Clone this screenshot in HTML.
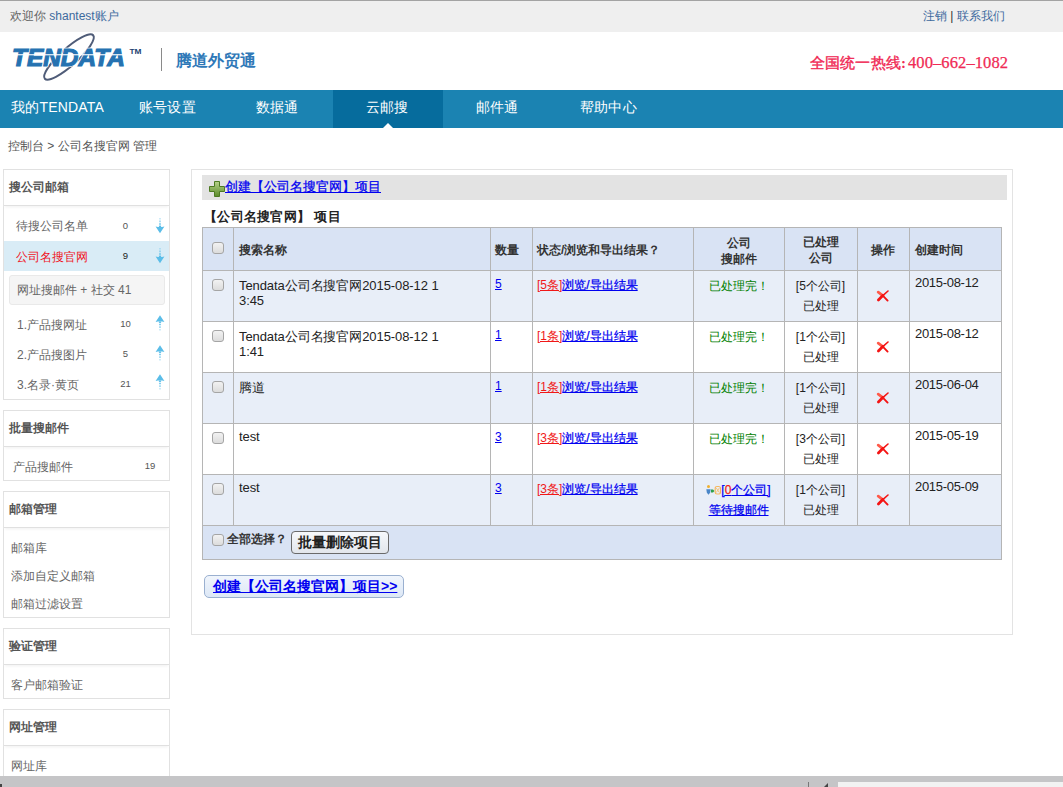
<!DOCTYPE html>
<html><head><meta charset="utf-8">
<style>
*{box-sizing:border-box}
html,body{margin:0;padding:0}
body{width:1063px;height:787px;overflow:hidden;position:relative;background:#fff;font-family:"Liberation Sans",sans-serif;font-size:12px;color:#333}
.abs{position:absolute}
a{color:inherit;text-decoration:none}
#topbar{left:0;top:0;width:1063px;height:32px;z-index:2;background:#efefef;border-top:1px solid #a3a3a3}
#topbar .l{left:10px;top:8px;line-height:14px;color:#666;white-space:nowrap}
#topbar .l span{color:#3d6a9e}
#topbar .r{left:923px;top:8px;line-height:14px;color:#3d6a9e;white-space:nowrap}
#topbar .r b{font-weight:normal;color:#333}
#header{left:0;top:31px;width:1063px;height:59px}
.hot{font-family:"Liberation Serif",serif;font-weight:bold;font-size:15px;line-height:16px;color:#f02a55;white-space:nowrap;letter-spacing:0.15px}
.hot .cj{font-weight:normal;-webkit-text-stroke:0.4px #f02a55}
.hot.dg{font-weight:normal;font-size:16.5px;-webkit-text-stroke:0.25px #f02a55;letter-spacing:0.1px}
.hot i{font-style:normal;display:inline-block;width:8.3px;text-align:center}
#nav{left:0;top:90px;width:1063px;height:38px;background:#1b83b2}
#nav .it{top:-2px;height:38px;line-height:38px;color:#fff;font-size:14px;white-space:nowrap;letter-spacing:0.2px}
#nav .act{left:333px;width:110px;top:0;height:38px;background:#066c9d}
#crumb{left:8px;top:139px;line-height:14px;color:#555;white-space:nowrap}
.panel{left:3px;width:167px;border:1px solid #e1e1e1;background:#fff}
.panel .hd{height:36px;border-bottom:1px solid #e0e0e0;box-shadow:0 2px 3px -1px #f0f0f0;font-weight:bold;color:#555;padding-left:5px;padding-top:10px;line-height:14px}
.panel .it{line-height:14px;color:#666;white-space:nowrap}
.panel .red{color:#f0141e}
.panel .num{left:110px;width:23px;text-align:center;font-size:9.5px;margin-top:-1px;line-height:14px;color:#555}
.panel .dk{color:#222}
.panel .hl{left:0;width:165px;height:30px;background:#d9ecf6}
.panel .box{left:5px;width:156px;height:30px;background:#f5f5f5;border:1px solid #e9e9e9;border-radius:3px;line-height:28px;color:#666;white-space:nowrap}
.panel .arr{left:151px}
#main{left:191px;top:169px;width:822px;height:466px;border:1px solid #e3e3e3}
.hl1{left:202px;width:800px;height:1px;background:#b5b5b5}
.vl1{top:227px;width:1px;background:#b5b5b5}
.cb{width:12px;height:12px;border:1px solid #a5a5a5;border-radius:3px;background:linear-gradient(#f2f2f2,#dcdcdc)}
.th{font-weight:bold;color:#333;line-height:14px;white-space:nowrap}
.td{line-height:16px;white-space:nowrap}
.ctr{text-align:center}
.lk{color:#0000f0;text-decoration:underline;-webkit-text-stroke-width:0.25px}
.lk.red,.red{color:#f01818}
.lk.red,.td.lk{-webkit-text-stroke-width:0}
.btn{border:1px solid #6a6a6a;border-radius:4px;background:linear-gradient(#f6f8fb,#e2e6ec);font-weight:bold;font-size:14px;line-height:21px;text-align:center;color:#222}
.btn2{border:1px solid #9ab0d0;border-radius:5px;background:linear-gradient(#f0f5fc,#dde8f6);font-weight:bold;font-size:14px;line-height:21px;text-align:left;padding-left:8px;color:#0000f0;white-space:nowrap}
.btn2 span{text-decoration:underline}
</style></head><body>

<div id="topbar" class="abs">
  <div class="abs l">欢迎你 <span>shantest账户</span></div>
  <div class="abs r">注销 <b>|</b> 联系我们</div>
</div>

<div id="header" class="abs">
  <svg class="abs" style="left:0;top:0" width="160" height="59" viewBox="0 31 160 59">
    <g transform="translate(69 57) rotate(-42)">
      <ellipse cx="0" cy="0" rx="32.5" ry="8.5" fill="none" stroke="#4f5c78" stroke-width="2"/>
    </g>
    <text x="12" y="65.6" font-family="Liberation Sans" font-weight="bold" font-style="italic" font-size="23" fill="#fff" stroke="#fff" stroke-width="2.6" textLength="113" lengthAdjust="spacingAndGlyphs">TENDATA</text><text x="12" y="65.6" font-family="Liberation Sans" font-weight="bold" font-style="italic" font-size="23" fill="#2572b1" stroke="#2572b1" stroke-width="1.1" textLength="113" lengthAdjust="spacingAndGlyphs">TENDATA</text>
    <rect x="10" y="54.2" width="120" height="1.1" fill="#fff"/>
    <text x="129.5" y="54" font-family="Liberation Sans" font-weight="bold" font-size="7.5" fill="#1d3f70" textLength="12" lengthAdjust="spacingAndGlyphs">TM</text>
  </svg>
  <div class="abs" style="left:161px;top:17px;width:1px;height:23px;background:#8a8a8a"></div>
  <div class="abs" style="left:176px;top:21px;font-size:16px;line-height:18px;color:#2f79b8;font-weight:bold;white-space:nowrap">腾道外贸通</div>
  <div class="abs hot" style="left:810px;top:24px"><span class="cj">全国统一热线</span></div><div class="abs hot" style="left:901px;top:24px">:</div><div class="abs hot dg" style="left:908px;top:24px">400<i>–</i>662<i>–</i>1082</div>
</div>

<div id="nav" class="abs">
  <div class="abs act"></div>
  <div class="abs" style="left:383px;top:33px;width:0;height:0;border-left:5px solid transparent;border-right:5px solid transparent;border-bottom:5px solid #fff"></div>
  <div class="abs it" style="left:11px">我的TENDATA</div>
  <div class="abs it" style="left:139px">账号设置</div>
  <div class="abs it" style="left:256px">数据通</div>
  <div class="abs it" style="left:366px">云邮搜</div>
  <div class="abs it" style="left:476px">邮件通</div>
  <div class="abs it" style="left:580px">帮助中心</div>
</div>

<div id="crumb" class="abs">控制台 &gt; 公司名搜官网 管理</div>


<div class="abs panel" style="top:169px;height:231px">
  <div class="hd">搜公司邮箱</div>
  <div class="abs it" style="top:49px;left:12px">待搜公司名单</div><div class="abs num" style="top:50px">0</div><svg class="abs arr" style="top:48px" width="10" height="16" viewBox="0 0 10 16"><path d="M4 0h2v1.6h-2z" fill="#5bbde8" opacity="0.3"/><path d="M4 2.6h2v1.6h-2z" fill="#5bbde8" opacity="0.5"/><path d="M4 5.2h2v1.6h-2z" fill="#5bbde8" opacity="0.75"/><path d="M3.9 7.6h2.2v1.4h-2.2z" fill="#5bbde8"/><path d="M0.6 8.6 Q2.5 9.2 3.5 9 L5 9 L6.5 9 Q7.5 9.2 9.4 8.6 L5 15.2 Z" fill="#5bbde8"/></svg>
  <div class="abs hl" style="top:71px"></div>
  <div class="abs it red" style="top:80px;left:12px">公司名搜官网</div><div class="abs num dk" style="top:80px">9</div><svg class="abs arr" style="top:78px" width="10" height="16" viewBox="0 0 10 16"><path d="M4 0h2v1.6h-2z" fill="#5bbde8" opacity="0.3"/><path d="M4 2.6h2v1.6h-2z" fill="#5bbde8" opacity="0.5"/><path d="M4 5.2h2v1.6h-2z" fill="#5bbde8" opacity="0.75"/><path d="M3.9 7.6h2.2v1.4h-2.2z" fill="#5bbde8"/><path d="M0.6 8.6 Q2.5 9.2 3.5 9 L5 9 L6.5 9 Q7.5 9.2 9.4 8.6 L5 15.2 Z" fill="#5bbde8"/></svg>
  <div class="abs box" style="top:105px"><span style="position:absolute;left:7px;top:0">网址搜邮件 + 社交</span><span style="position:absolute;left:108px;top:0">41</span></div>
  <div class="abs it" style="top:148px;left:13px">1.产品搜网址</div><div class="abs num" style="top:148px">10</div><svg class="abs arr" style="top:145px" width="10" height="16" viewBox="0 0 10 16"><g transform="translate(0 15.5) scale(1 -1)"><path d="M4 0h2v1.6h-2z" fill="#5bbde8" opacity="0.3"/><path d="M4 2.6h2v1.6h-2z" fill="#5bbde8" opacity="0.5"/><path d="M4 5.2h2v1.6h-2z" fill="#5bbde8" opacity="0.75"/><path d="M3.9 7.6h2.2v1.4h-2.2z" fill="#5bbde8"/><path d="M0.6 8.6 Q2.5 9.2 3.5 9 L5 9 L6.5 9 Q7.5 9.2 9.4 8.6 L5 15.2 Z" fill="#5bbde8"/></g></svg>
  <div class="abs it" style="top:178px;left:13px">2.产品搜图片</div><div class="abs num" style="top:178px">5</div><svg class="abs arr" style="top:175px" width="10" height="16" viewBox="0 0 10 16"><g transform="translate(0 15.5) scale(1 -1)"><path d="M4 0h2v1.6h-2z" fill="#5bbde8" opacity="0.3"/><path d="M4 2.6h2v1.6h-2z" fill="#5bbde8" opacity="0.5"/><path d="M4 5.2h2v1.6h-2z" fill="#5bbde8" opacity="0.75"/><path d="M3.9 7.6h2.2v1.4h-2.2z" fill="#5bbde8"/><path d="M0.6 8.6 Q2.5 9.2 3.5 9 L5 9 L6.5 9 Q7.5 9.2 9.4 8.6 L5 15.2 Z" fill="#5bbde8"/></g></svg>
  <div class="abs it" style="top:208px;left:13px">3.名录·黄页</div><div class="abs num" style="top:208px">21</div><svg class="abs arr" style="top:204px" width="10" height="16" viewBox="0 0 10 16"><g transform="translate(0 15.5) scale(1 -1)"><path d="M4 0h2v1.6h-2z" fill="#5bbde8" opacity="0.3"/><path d="M4 2.6h2v1.6h-2z" fill="#5bbde8" opacity="0.5"/><path d="M4 5.2h2v1.6h-2z" fill="#5bbde8" opacity="0.75"/><path d="M3.9 7.6h2.2v1.4h-2.2z" fill="#5bbde8"/><path d="M0.6 8.6 Q2.5 9.2 3.5 9 L5 9 L6.5 9 Q7.5 9.2 9.4 8.6 L5 15.2 Z" fill="#5bbde8"/></g></svg>
</div>
<div class="abs panel" style="top:410px;height:71px">
  <div class="hd">批量搜邮件</div>
  <div class="abs it" style="top:49px;left:9px">产品搜邮件</div><div class="abs num" style="top:49px;left:136px;width:20px">19</div>
</div>
<div class="abs panel" style="top:491px;height:127px">
  <div class="hd">邮箱管理</div>
  <div class="abs it" style="top:49px;left:7px">邮箱库</div>
  <div class="abs it" style="top:77px;left:7px">添加自定义邮箱</div>
  <div class="abs it" style="top:105px;left:7px">邮箱过滤设置</div>
</div>
<div class="abs panel" style="top:628px;height:71px">
  <div class="hd">验证管理</div>
  <div class="abs it" style="top:49px;left:7px">客户邮箱验证</div>
</div>
<div class="abs panel" style="top:709px;height:80px">
  <div class="hd">网址管理</div>
  <div class="abs it" style="top:49px;left:7px">网址库</div>
</div>

<div id="main" class="abs"></div>
<div class="abs" style="left:202px;top:175px;width:805px;height:25px;background:#e3e3e3"></div>
<svg class="abs" style="left:208px;top:180px" width="18" height="18" viewBox="0 0 18 18">
  <defs><linearGradient id="gp" x1="0" y1="0" x2="0" y2="1"><stop offset="0" stop-color="#b7d38a"/><stop offset="1" stop-color="#5b8a2a"/></linearGradient></defs>
  <path d="M6.5 1.5h5v5h5v5h-5v5h-5v-5h-5v-5h5z" fill="url(#gp)" stroke="#4d7a22" stroke-width="1" stroke-linejoin="round"/>
</svg>
<div class="abs lk" style="left:225px;top:179px;font-size:13px;line-height:15px;color:#0000f0">创建【公司名搜官网】项目</div>
<div class="abs" style="left:204px;top:209px;font-size:13px;line-height:15px;font-weight:bold;color:#222;white-space:nowrap;letter-spacing:0.3px">【公司名搜官网】 项目</div>
<div class="abs" style="left:202px;top:227px;width:800px;height:44px;background:#d9e3f4"></div>
<div class="abs" style="left:202px;top:270px;width:800px;height:52px;background:#e8eef8"></div>
<div class="abs" style="left:202px;top:321px;width:800px;height:52px;background:#ffffff"></div>
<div class="abs" style="left:202px;top:372px;width:800px;height:52px;background:#e8eef8"></div>
<div class="abs" style="left:202px;top:423px;width:800px;height:52px;background:#ffffff"></div>
<div class="abs" style="left:202px;top:474px;width:800px;height:52px;background:#e8eef8"></div>
<div class="abs" style="left:202px;top:525px;width:800px;height:35px;background:#d9e3f4"></div>
<div class="abs hl1" style="top:227px"></div>
<div class="abs hl1" style="top:270px"></div>
<div class="abs hl1" style="top:321px"></div>
<div class="abs hl1" style="top:372px"></div>
<div class="abs hl1" style="top:423px"></div>
<div class="abs hl1" style="top:474px"></div>
<div class="abs hl1" style="top:525px"></div>
<div class="abs hl1" style="top:559px"></div>
<div class="abs vl1" style="left:202px;height:333px"></div>
<div class="abs vl1" style="left:233px;height:299px"></div>
<div class="abs vl1" style="left:490px;height:299px"></div>
<div class="abs vl1" style="left:532px;height:299px"></div>
<div class="abs vl1" style="left:693px;height:299px"></div>
<div class="abs vl1" style="left:784px;height:299px"></div>
<div class="abs vl1" style="left:857px;height:299px"></div>
<div class="abs vl1" style="left:909px;height:299px"></div>
<div class="abs vl1" style="left:1001px;height:333px"></div>
<div class="abs cb" style="left:212px;top:242px"></div>
<div class="abs th" style="left:239px;top:243px">搜索名称</div>
<div class="abs th" style="left:495px;top:243px">数量</div>
<div class="abs th" style="left:537px;top:243px">状态/浏览和导出结果？</div>
<div class="abs th ctr" style="left:693px;width:91px;top:235px;line-height:16px">公司<br>搜邮件</div>
<div class="abs th ctr" style="left:784px;width:73px;top:234px;line-height:16px">已处理<br>公司</div>
<div class="abs th ctr" style="left:857px;width:52px;top:243px">操作</div>
<div class="abs th" style="left:915px;top:243px">创建时间</div>
<div class="abs cb" style="left:212px;top:279px"></div>
<div class="abs td" style="left:239px;top:278px;line-height:15px;font-size:13px;color:#222;letter-spacing:-0.08px">Tendata公司名搜官网2015-08-12 1<br>3:45</div>
<div class="abs td lk" style="left:495px;top:276px">5</div>
<div class="abs td" style="left:537px;top:277px"><span class="lk red">[5条]</span><span class="lk">浏览/导出结果</span></div>
<div class="abs td ctr" style="left:693px;width:91px;top:278px;color:#008000">已处理完！</div>
<div class="abs td ctr" style="left:784px;width:73px;top:276px;line-height:20px;color:#222">[5个公司]<br>已处理</div>
<svg class="abs" style="left:876px;top:290px" width="13" height="12" viewBox="0 0 13 12"><g stroke="#f41414" stroke-linecap="round" fill="none"><path d="M2.2 2.2 L6.8 5.6" stroke-width="2.8" stroke="#ff5a4a"/><path d="M6.8 5.6 L12 1" stroke-width="1.6"/><path d="M6.8 5.6 L2.4 10" stroke-width="2.8"/><path d="M6.8 5.6 L11.6 10.6" stroke-width="1.9"/></g></svg>
<div class="abs td" style="left:915px;top:275px;font-size:13px;letter-spacing:-0.3px;color:#222">2015-08-12</div>
<div class="abs cb" style="left:212px;top:330px"></div>
<div class="abs td" style="left:239px;top:329px;line-height:15px;font-size:13px;color:#222;letter-spacing:-0.08px">Tendata公司名搜官网2015-08-12 1<br>1:41</div>
<div class="abs td lk" style="left:495px;top:327px">1</div>
<div class="abs td" style="left:537px;top:328px"><span class="lk red">[1条]</span><span class="lk">浏览/导出结果</span></div>
<div class="abs td ctr" style="left:693px;width:91px;top:329px;color:#008000">已处理完！</div>
<div class="abs td ctr" style="left:784px;width:73px;top:327px;line-height:20px;color:#222">[1个公司]<br>已处理</div>
<svg class="abs" style="left:876px;top:341px" width="13" height="12" viewBox="0 0 13 12"><g stroke="#f41414" stroke-linecap="round" fill="none"><path d="M2.2 2.2 L6.8 5.6" stroke-width="2.8" stroke="#ff5a4a"/><path d="M6.8 5.6 L12 1" stroke-width="1.6"/><path d="M6.8 5.6 L2.4 10" stroke-width="2.8"/><path d="M6.8 5.6 L11.6 10.6" stroke-width="1.9"/></g></svg>
<div class="abs td" style="left:915px;top:326px;font-size:13px;letter-spacing:-0.3px;color:#222">2015-08-12</div>
<div class="abs cb" style="left:212px;top:381px"></div>
<div class="abs td" style="left:239px;top:380px;line-height:15px;font-size:13px;color:#222;letter-spacing:-0.08px">腾道</div>
<div class="abs td lk" style="left:495px;top:378px">1</div>
<div class="abs td" style="left:537px;top:379px"><span class="lk red">[1条]</span><span class="lk">浏览/导出结果</span></div>
<div class="abs td ctr" style="left:693px;width:91px;top:380px;color:#008000">已处理完！</div>
<div class="abs td ctr" style="left:784px;width:73px;top:378px;line-height:20px;color:#222">[1个公司]<br>已处理</div>
<svg class="abs" style="left:876px;top:392px" width="13" height="12" viewBox="0 0 13 12"><g stroke="#f41414" stroke-linecap="round" fill="none"><path d="M2.2 2.2 L6.8 5.6" stroke-width="2.8" stroke="#ff5a4a"/><path d="M6.8 5.6 L12 1" stroke-width="1.6"/><path d="M6.8 5.6 L2.4 10" stroke-width="2.8"/><path d="M6.8 5.6 L11.6 10.6" stroke-width="1.9"/></g></svg>
<div class="abs td" style="left:915px;top:377px;font-size:13px;letter-spacing:-0.3px;color:#222">2015-06-04</div>
<div class="abs cb" style="left:212px;top:432px"></div>
<div class="abs td" style="left:239px;top:429px;line-height:15px;font-size:13px;color:#222;letter-spacing:-0.08px">test</div>
<div class="abs td lk" style="left:495px;top:429px">3</div>
<div class="abs td" style="left:537px;top:430px"><span class="lk red">[3条]</span><span class="lk">浏览/导出结果</span></div>
<div class="abs td ctr" style="left:693px;width:91px;top:431px;color:#008000">已处理完！</div>
<div class="abs td ctr" style="left:784px;width:73px;top:429px;line-height:20px;color:#222">[3个公司]<br>已处理</div>
<svg class="abs" style="left:876px;top:443px" width="13" height="12" viewBox="0 0 13 12"><g stroke="#f41414" stroke-linecap="round" fill="none"><path d="M2.2 2.2 L6.8 5.6" stroke-width="2.8" stroke="#ff5a4a"/><path d="M6.8 5.6 L12 1" stroke-width="1.6"/><path d="M6.8 5.6 L2.4 10" stroke-width="2.8"/><path d="M6.8 5.6 L11.6 10.6" stroke-width="1.9"/></g></svg>
<div class="abs td" style="left:915px;top:428px;font-size:13px;letter-spacing:-0.3px;color:#222">2015-05-19</div>
<div class="abs cb" style="left:212px;top:483px"></div>
<div class="abs td" style="left:239px;top:480px;line-height:15px;font-size:13px;color:#222;letter-spacing:-0.08px">test</div>
<div class="abs td lk" style="left:495px;top:480px">3</div>
<div class="abs td" style="left:537px;top:481px"><span class="lk red">[3条]</span><span class="lk">浏览/导出结果</span></div>
<div class="abs td ctr" style="left:693px;width:91px;top:480px;line-height:20px"><svg width="15" height="10" viewBox="0 0 15 10" style="vertical-align:-1px"><circle cx="2.5" cy="1.6" r="1.5" fill="#f0b030"/><path d="M0.3 4.2h4.4l-0.6 3.5l-1.6 2l-1.6-2z" fill="#4a86c8"/><path d="M5 4.5h2l1.5 1.5l-1.5 1.5h-2z" fill="#2ea04a"/><rect x="9.2" y="1.5" width="5.3" height="7.5" rx="1.8" fill="none" stroke="#f5b860" stroke-width="1.2"/><path d="M10.3 3l3 4.5M13.3 3l-3 4.5" stroke="#f5c070" stroke-width="0.9"/></svg><span class="lk">[<span class="red">0</span>个公司]</span><br><span class="lk">等待搜邮件</span></div>
<div class="abs td ctr" style="left:784px;width:73px;top:480px;line-height:20px;color:#222">[1个公司]<br>已处理</div>
<svg class="abs" style="left:876px;top:494px" width="13" height="12" viewBox="0 0 13 12"><g stroke="#f41414" stroke-linecap="round" fill="none"><path d="M2.2 2.2 L6.8 5.6" stroke-width="2.8" stroke="#ff5a4a"/><path d="M6.8 5.6 L12 1" stroke-width="1.6"/><path d="M6.8 5.6 L2.4 10" stroke-width="2.8"/><path d="M6.8 5.6 L11.6 10.6" stroke-width="1.9"/></g></svg>
<div class="abs td" style="left:915px;top:479px;font-size:13px;letter-spacing:-0.3px;color:#222">2015-05-09</div>
<div class="abs cb" style="left:212px;top:534px"></div>
<div class="abs th" style="left:227px;top:532px">全部选择？</div>
<div class="abs btn" style="left:291px;top:531px;width:98px;height:23px">批量删除项目</div>
<div class="abs btn2" style="left:204px;top:575px;width:200px;height:23px"><span>创建【公司名搜官网】项目&gt;&gt;</span></div>



<div class="abs" style="left:0;top:776px;width:1063px;height:11px;background:#c5c5c7"></div>
<div class="abs" style="left:0;top:784px;width:2px;height:3px;background:#444"></div>
<div class="abs" style="left:808px;top:782px;width:1px;height:5px;background:#777"></div>
<div class="abs" style="left:824px;top:783px;width:0;height:0;border-left:4px solid transparent;border-bottom:4px solid #444"></div>
<div class="abs" style="left:838px;top:782px;width:225px;height:5px;background:#f2f2f2"></div>
</body></html>
